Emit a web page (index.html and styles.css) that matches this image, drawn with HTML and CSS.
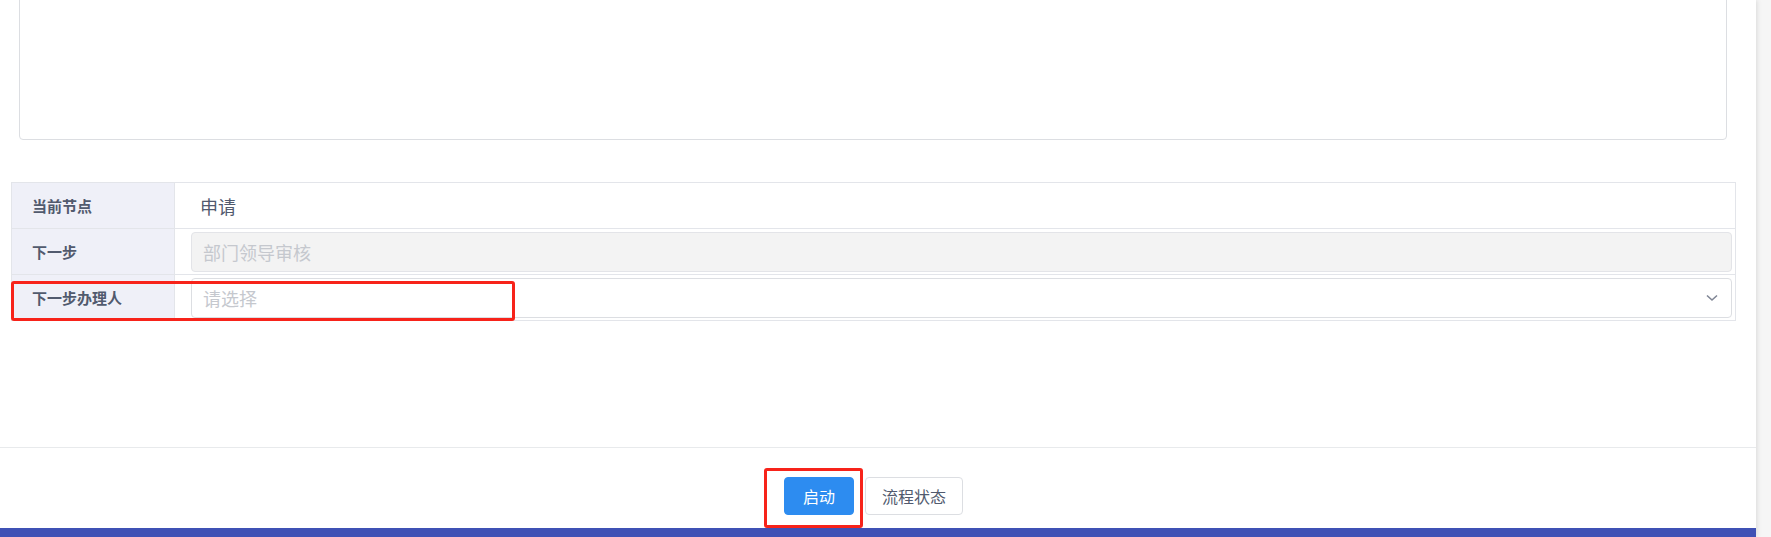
FILE: index.html
```html
<!DOCTYPE html>
<html lang="zh-CN">
  <head>
    <meta charset="UTF-8" />
    <meta name="viewport" content="width=device-width, initial-scale=1.0" />
    <title>流程启动</title>
    <link rel="stylesheet" href="styles.css">
  </head>
  <body>
    <div class="page">
      <div class="content">
        <div class="remark"></div>

        <div class="form-table">
          <div class="row">
            <div class="label">当前节点</div>
            <div class="value text">申请</div>
          </div>
          <div class="row">
            <div class="label">下一步</div>
            <div class="value">
              <div class="input disabled">部门领导审核</div>
            </div>
          </div>
          <div class="row">
            <div class="label">下一步办理人</div>
            <div class="value">
              <div class="input select">
                <span class="placeholder">请选择</span>
                <svg class="arrow" width="12" height="8" viewBox="0 0 12 8">
                  <polyline points="1,1.5 6,6 11,1.5" fill="none" stroke="#808695" stroke-width="1.6" />
                </svg>
              </div>
            </div>
          </div>
        </div>
      </div>

      <div class="footer">
        <button class="btn primary">启动</button>
        <button class="btn">流程状态</button>
      </div>
      <div class="bottom-bar"></div>

      <!-- annotation marks -->
      <div class="mark mark-handler"></div>
      <div class="mark mark-start"></div>
    </div>
  </body>
</html>
```

FILE: styles.css
```css
* {
  box-sizing: border-box;
}

body {
  margin: 0;
  background: #f6f6f6;
  font-family: "Noto Sans CJK SC", "Noto Sans", sans-serif;
  color: #515a6e;
  overflow: hidden;
}

.page {
  position: relative;
  width: 1756px;
  height: 537px;
  background: #fff;
  display: flex;
  flex-direction: column;
  box-shadow: 1px 0 5px rgba(0, 0, 0, 0.12);
}

.content {
  flex: 1;
  padding: 0 20px 0 11px;
}

.remark {
  height: 160px;
  margin: -20px 9px 0 8px;
  border: 1px solid #dcdee2;
  border-radius: 4px;
}

/* form table */
.form-table {
  margin-top: 42px;
  border: 1px solid #e3e5ea;
}

.row {
  display: flex;
  height: 46px;
  border-bottom: 1px solid #e3e5ea;
}

.row:last-child {
  height: 45px;
  border-bottom: none;
}

.label {
  width: 163px;
  flex-shrink: 0;
  display: flex;
  align-items: center;
  padding-left: 20px;
  background: #eff0f8;
  border-right: 1px solid #e3e5ea;
  font-size: 15px;
  font-weight: bold;
  color: #515a6e;
}

.value {
  flex: 1;
  display: flex;
  align-items: center;
  padding: 0 3px 0 16px;
}

.value.text {
  padding-left: 25px;
  font-size: 18px;
}

.input {
  width: 100%;
  height: 40px;
  display: flex;
  align-items: center;
  padding: 0 13px 0 11px;
  border: 1px solid #dcdee2;
  border-radius: 4px;
  font-size: 18px;
}

.input.disabled {
  background: #f3f3f3;
  border-color: #e3e4e8;
  color: #c5c8ce;
}

.select {
  justify-content: space-between;
}

.placeholder {
  color: #c5c8ce;
}

/* footer */
.footer {
  display: flex;
  justify-content: center;
  gap: 11px;
  padding: 29px 9px 13px 0;
  border-top: 1px solid #e8eaec;
}

.btn {
  height: 38px;
  padding: 0 16px;
  font-family: inherit;
  font-size: 16px;
  color: #515a6e;
  background: #fff;
  border: 1px solid #dcdee2;
  border-radius: 4px;
}

.btn.primary {
  width: 70px;
  padding: 0;
  color: #fff;
  background: #2d8cf0;
  border-color: #2d8cf0;
}

.bottom-bar {
  height: 9px;
  background: #3f51b5;
}

/* red annotation boxes */
.mark {
  position: absolute;
  border: 3px solid #f7231a;
  border-radius: 3px;
}

.mark-handler {
  left: 11px;
  top: 281px;
  width: 504px;
  height: 40px;
}

.mark-start {
  left: 764px;
  top: 468px;
  width: 99px;
  height: 60px;
}
```
